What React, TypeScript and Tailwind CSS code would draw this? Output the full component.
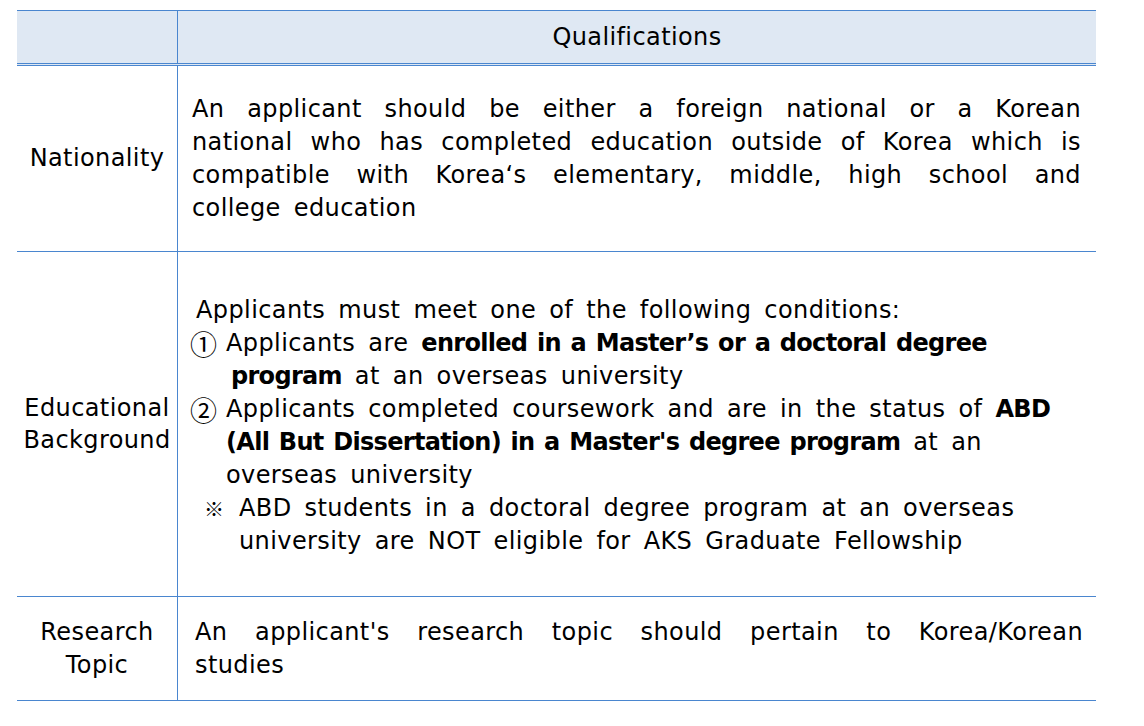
import React from 'react';

const font = "font-['DejaVu_Sans','Noto_Sans_CJK_KR',sans-serif]";

// one justified line (stretched to full width)
const JLine = ({ children }: { children: React.ReactNode }) => (
  <div className="text-justify [text-align-last:justify]">{children}</div>
);

const Item = ({ mark, markClass, children }: { mark: string; markClass: string; children: React.ReactNode }) => (
  <div className="flex">
    <span className={`shrink-0 tracking-normal font-['Noto_Sans_CJK_KR',sans-serif] ${markClass}`}>{mark}</span>
    <div>{children}</div>
  </div>
);

const B = ({ children }: { children: React.ReactNode }) => (
  <b className="tracking-[-0.7px] [word-spacing:2px]">{children}</b>
);

export default function App() {
  return (
    <div className={`bg-white min-h-[726px] pt-[10px] pl-[17px] text-[24px] leading-[33px] tracking-[0.4px] text-black ${font}`}>
      <div className="w-[1079px]">
        {/* header */}
        <div className="flex h-[56px] border-t border-b-[3px] border-double border-[#4a86cf] bg-[#dfe8f3]">
          <div className="w-[161px] shrink-0 border-r border-[#4a86cf]" />
          <div className="flex-1 flex items-center justify-center">Qualifications</div>
        </div>

        {/* nationality */}
        <div className="flex h-[186px] border-b border-[#4a86cf]">
          <div className="w-[161px] shrink-0 border-r border-[#4a86cf] flex items-center justify-center text-center">
            Nationality
          </div>
          <div className="flex-1 flex flex-col justify-center pl-[14px] pr-[15px] [word-spacing:5px]">
            <JLine>An applicant should be either a foreign national or a Korean</JLine>
            <JLine>national who has completed education outside of Korea which is</JLine>
            <JLine>compatible with Korea‘s elementary, middle, high school and</JLine>
            <div>college education</div>
          </div>
        </div>

        {/* educational background */}
        <div className="flex h-[345px] border-b border-[#4a86cf]">
          <div className="w-[161px] shrink-0 border-r border-[#4a86cf] flex flex-col items-center justify-center text-center leading-[32px]">
            <div>Educational</div>
            <div>Background</div>
          </div>
          <div className="flex-1 flex flex-col justify-center pl-[12px] pt-[4px] [word-spacing:5px] whitespace-nowrap">
            <div className="pl-[6px]">Applicants must meet one of the following conditions:</div>
            <Item mark="①" markClass="w-[36px] text-[27px] leading-[33px]">
              <div>
                Applicants are <B>enrolled in a Master’s or a doctoral degree</B>
              </div>
              <div className="pl-[5px]">
                <B>program</B> at an overseas university
              </div>
            </Item>
            <Item mark="②" markClass="w-[36px] text-[27px] leading-[33px]">
              <div>
                Applicants completed coursework and are in the status of <B>ABD</B>
              </div>
              <div>
                <B>(All But Dissertation) in a Master's degree program</B> at an
              </div>
              <div>overseas university</div>
            </Item>
            <Item mark="※" markClass="w-[49px] pl-[14px] text-[20px]">
              <div>ABD students in a doctoral degree program at an overseas</div>
              <div>university are NOT eligible for AKS Graduate Fellowship</div>
            </Item>
          </div>
        </div>

        {/* research topic */}
        <div className="flex h-[104px] border-b border-[#4a86cf]">
          <div className="w-[161px] shrink-0 border-r border-[#4a86cf] flex flex-col items-center justify-center text-center">
            <div>Research</div>
            <div>Topic</div>
          </div>
          <div className="flex-1 flex flex-col justify-center pl-[17px] pr-[13px] [word-spacing:5px]">
            <JLine>An applicant's research topic should pertain to Korea/Korean</JLine>
            <div>studies</div>
          </div>
        </div>
      </div>
    </div>
  );
}
